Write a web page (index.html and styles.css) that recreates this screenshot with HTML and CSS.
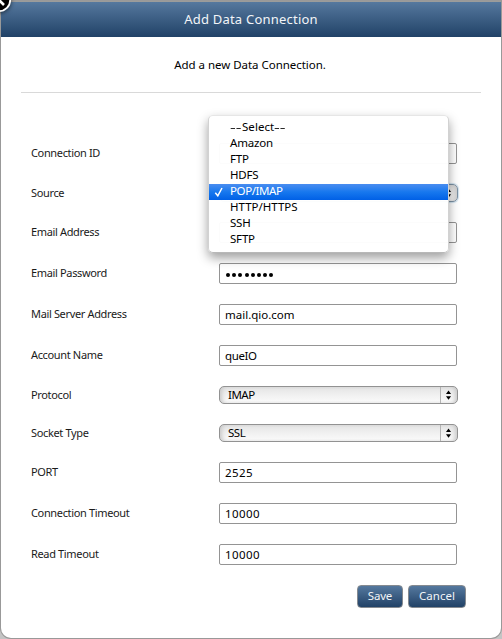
FILE: index.html
```
<!DOCTYPE html>
<html lang="en">
<head>
<meta charset="utf-8">
<title>Add Data Connection</title>
<link rel="stylesheet" href="styles.css">
</head>
<body>
<main class="dialog">
  <h1 class="title"><span>Add Data Connection</span></h1>
  <p class="intro"><span>Add a new Data Connection.</span></p>
  <form class="form">
    <div class="row"><span class="label">Connection ID</span><div class="field"></div></div>
    <div class="row choice">
      <span class="label">Source</span>
      <div class="select focused"><span class="value"></span><svg class="arrows" viewBox="0 0 17 16"><path d="M8 3.2l2.7 3.8h-5.4zM8 13l2.7-3.8h-5.4z"/></svg></div>
      <ul class="menu">
        <li class="placeholder"><span class="dash">--</span>Select<span class="dash">--</span></li>
        <li>Amazon</li>
        <li>FTP</li>
        <li>HDFS</li>
        <li class="selected"><svg class="check" viewBox="0 0 10 10"><path d="M1.3 5.8L3.8 8.8L8 1"/></svg>POP/IMAP</li>
        <li class="wide">HTTP/HTTPS</li>
        <li>SSH</li>
        <li>SFTP</li>
      </ul>
    </div>
    <div class="row"><span class="label">Email Address</span><div class="field"></div></div>
    <div class="row"><span class="label">Email Password</span><div class="field"><span class="dots"><i></i><i></i><i></i><i></i><i></i><i></i><i></i><i></i></span></div></div>
    <div class="row"><span class="label">Mail Server Address</span><div class="field">mail.qio.com</div></div>
    <div class="row"><span class="label">Account Name</span><div class="field account">queIO</div></div>
    <div class="row choice"><span class="label">Protocol</span><div class="select"><span class="value">IMAP</span><svg class="arrows" viewBox="0 0 17 16"><path d="M8 3.2l2.7 3.8h-5.4zM8 13l2.7-3.8h-5.4z"/></svg></div></div>
    <div class="row choice"><span class="label">Socket Type</span><div class="select"><span class="value">SSL</span><svg class="arrows" viewBox="0 0 17 16"><path d="M8 3.2l2.7 3.8h-5.4zM8 13l2.7-3.8h-5.4z"/></svg></div></div>
    <div class="row"><span class="label">PORT</span><div class="field number">2525</div></div>
    <div class="row"><span class="label">Connection Timeout</span><div class="field number">10000</div></div>
    <div class="row"><span class="label">Read Timeout</span><div class="field number">10000</div></div>
  </form>
  <div class="actions"><button class="button save">Save</button><button class="button cancel">Cancel</button></div>
</main>
<svg class="close" viewBox="0 0 26 26"><circle cx="13" cy="13" r="11.2"/><path d="M8.5 8.5l9.5 9.5M18 8.5l-9.5 9.5"/></svg>
</body>
</html>
```
FILE: styles.css
```
* { box-sizing: border-box; }
body {
  margin: 0;
  height: 639px;
  padding: 1px 1px 2px;
  overflow: hidden;
  background: linear-gradient(#bebdb8 0, #bebdb8 2px, #c4c4c4 3px);
  font-family: "Noto Sans", "Open Sans", sans-serif;
  font-size: 11.5px;
  color: #000;
}
.dialog {
  height: 637px;
  background: #fff;
  border-radius: 0 0 10px 10px;
  box-shadow: 0 0 0 1px #999;
  overflow: hidden;
}
.title {
  margin: 0;
  height: 36px;
  border-top: 1px solid #9b9c9b;
  background: linear-gradient(#55789e, #214267);
  color: #f2f5f8;
  font-size: 13px;
  font-weight: 400;
  line-height: 35px;
  text-align: center;
  letter-spacing: .22px;
}
.intro {
  margin: 0 20px;
  height: 56px;
  padding-right: 2px;
  border-bottom: 1px solid #d9d9d9;
  line-height: 56px;
  text-align: center;
  letter-spacing: -.03px;
}
.form {
  display: flex;
  flex-direction: column;
  gap: 20px;
  margin: 50px 0 0 30px;
}
.row { position: relative; display: flex; align-items: center; }
.label {
  width: 188px;
  padding-bottom: 2px;
  font-size: 11px;
  line-height: 14px;
  letter-spacing: -.35px;
  color: #1a1a1a;
}
.choice .label { padding-bottom: 0; }
.field {
  display: flex;
  align-items: center;
  width: 238px;
  height: 21px;
  padding: 1px 5px 0;
  border: 1px solid #949494;
  border-radius: 2px;
  line-height: 14px;
}
.account { letter-spacing: -.4px; }
.number { letter-spacing: .4px; }
.dots { display: flex; gap: 2.2px; padding: 2px 0 0 1px; }
.dots i { width: 4px; height: 4px; border-radius: 50%; background: #000; }
.select {
  display: flex;
  width: 239px;
  height: 18px;
  border: 1px solid #929292;
  border-radius: 5px;
  background: linear-gradient(#e3e3e3, #eee 40%, #fbfbfb);
  box-shadow: inset 4px 0 4px -2px #c9c9c9, inset -4px 0 4px -2px #c9c9c9;
}
.focused { border-color: #7c92a5; box-shadow: inset -4px 0 4px -2px #c9c9c9, 0 0 1px 1px #cfe1ee; }
.value { flex: 1; padding-left: 8px; line-height: 15px; letter-spacing: -.5px; }
.arrows { width: 17px; height: 16px; border-left: 1px solid #b4b4b4; }
.menu {
  position: absolute;
  z-index: 2;
  left: 177px;
  top: -69px;
  width: 241px;
  margin: 0;
  padding: 4px 0;
  list-style: none;
  background: rgba(255, 255, 255, .97);
  border: 1px solid #d2d2d2;
  border-top-color: #e6e6e6;
  border-bottom-color: #b8b8b8;
  border-radius: 5px;
  box-shadow: 0 5px 11px rgba(0, 0, 0, .38);
}
.menu li { position: relative; height: 16px; padding-left: 21px; line-height: 13px; letter-spacing: -.2px; }
.menu .selected { background: linear-gradient(#4a8df0, #1778ee 50%, #0060e6); color: #fff; letter-spacing: -.4px; }
.menu .wide { letter-spacing: 0; }
.menu .placeholder { letter-spacing: .05px; }
.dash {
  display: inline-block;
  width: 12px;
  letter-spacing: 0;
  transform: scaleX(1.55);
  transform-origin: left;
}
.check { position: absolute; left: 5px; top: 3px; width: 10px; height: 10px; fill: none; stroke: #fff; stroke-width: 1.5; }
.actions { display: flex; gap: 5px; margin: 20px 0 0 356px; }
.button {
  height: 23px;
  padding: 0 0 3px;
  border: 1px solid #858a90;
  border-radius: 4px;
  background: linear-gradient(#55789e, #214267);
  color: #f2f5f8;
  font: inherit;
}
.save { width: 46px; letter-spacing: -.2px; }
.cancel { width: 58px; }
.close { position: absolute; left: -14px; top: -13px; width: 26px; height: 26px; filter: drop-shadow(0 1px 2px rgba(0, 0, 0, .6)); }
.close circle { fill: #000; stroke: #fff; stroke-width: 1.8; }
.close path { stroke: #fff; stroke-width: 2.6; }
```
